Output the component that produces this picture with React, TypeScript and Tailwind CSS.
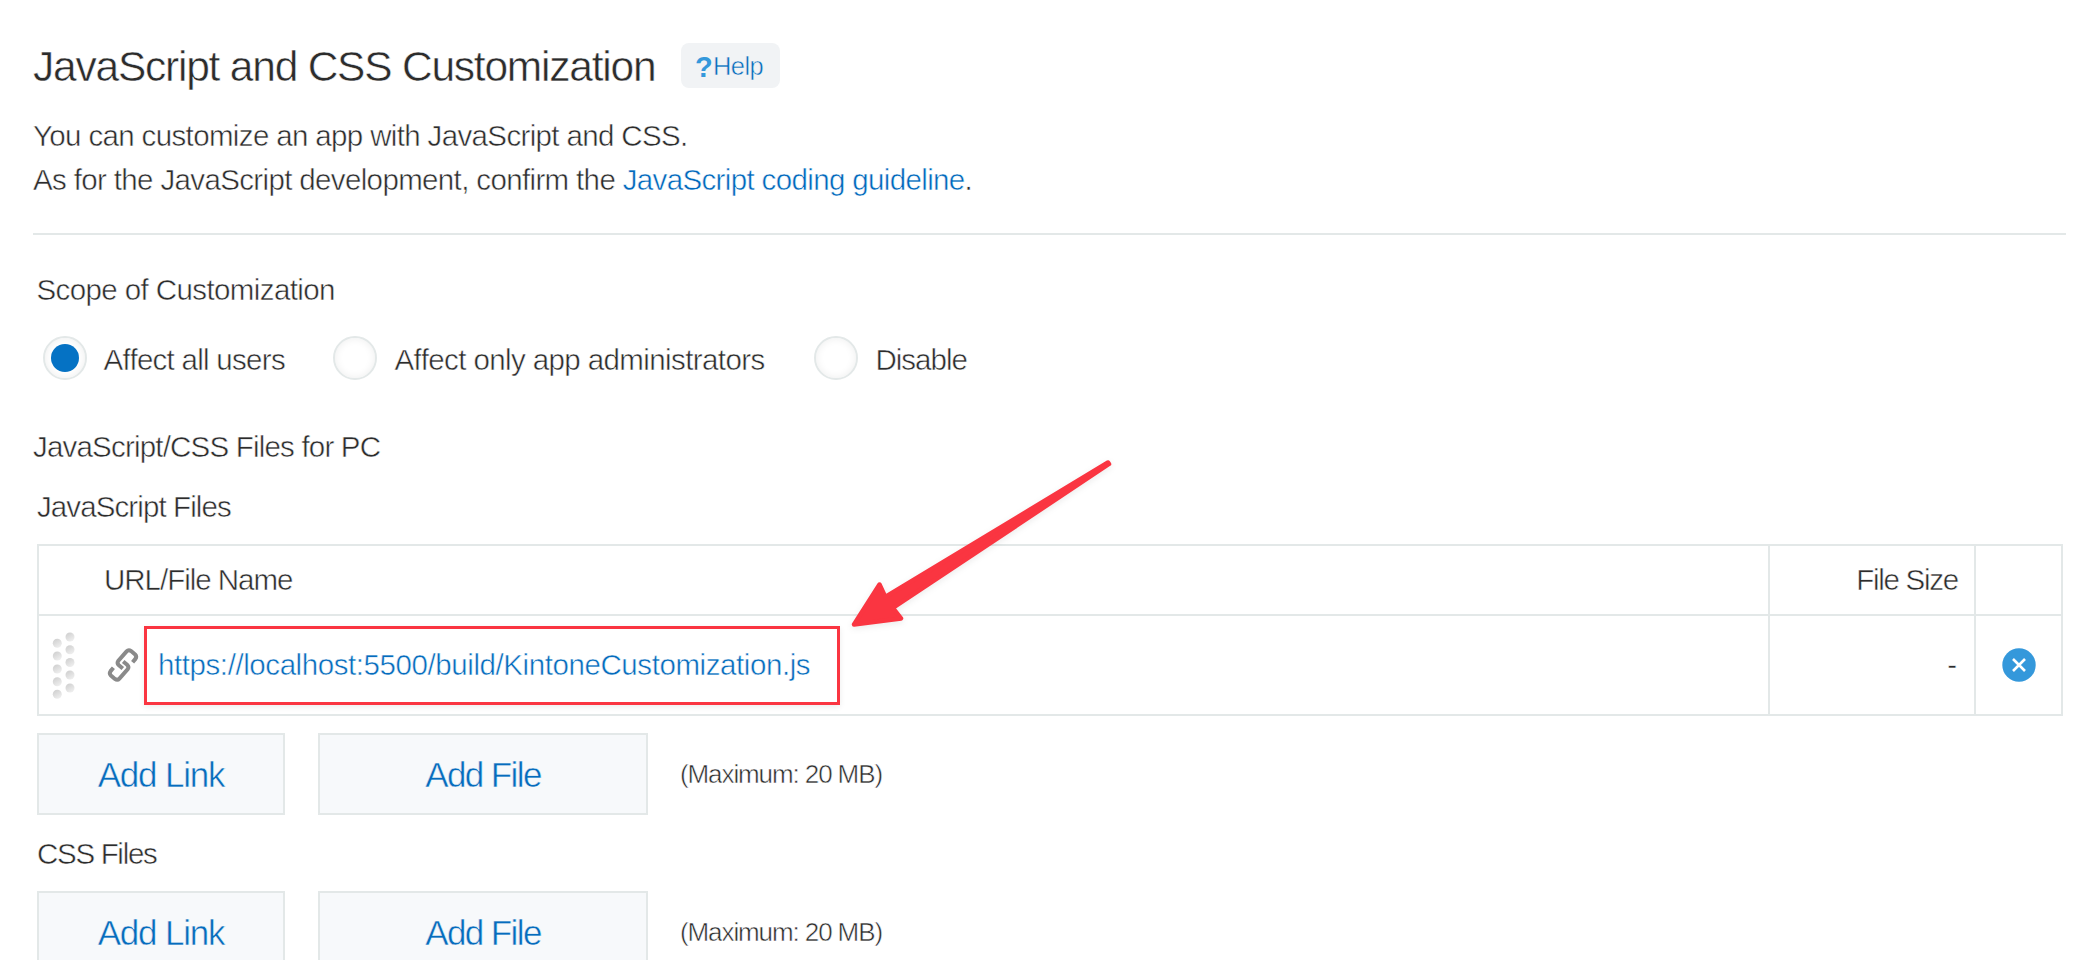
import type { ReactNode } from "react";

function RadioOption({ label, checked, className }: { label: string; checked?: boolean; className: string }) {
  return (
    <label className="flex items-start">
      <span className="flex size-11 items-center justify-center rounded-full border-2 border-[#e3e8e8] bg-white shadow-[inset_0_0_8px_rgba(0,0,0,0.07)]">
        {checked && <span className="size-7 rounded-full bg-[#0572c4]" />}
      </span>
      <span className={`mt-0.5 leading-[44px] ${className}`}>{label}</span>
    </label>
  );
}

function Heading({ children, className }: { children: ReactNode; className: string }) {
  return <h2 className={`h-11 leading-[44px] ${className}`}>{children}</h2>;
}

function Actions() {
  return (
    <div className="flex h-[82px] items-center">
      <button className="h-[82px] w-[248px] border-2 border-[#e3e8e8] bg-[#f7f9fb] pt-0.5 text-[35px] leading-[44px] tracking-[-1.2px] text-[#066cbd] [-webkit-text-stroke:0.5px_#f7f9fb]">
        Add Link
      </button>
      <button className="ml-[33px] h-[82px] w-[330px] border-2 border-[#e3e8e8] bg-[#f7f9fb] pt-0.5 text-[35px] leading-[44px] tracking-[-1.6px] text-[#066cbd] [-webkit-text-stroke:0.5px_#f7f9fb]">
        Add File
      </button>
      <span className="ml-8 pt-px text-[26px] tracking-[-1.1px]">(Maximum: 20 MB)</span>
    </div>
  );
}

function DragHandle() {
  const left = [8.3, 21, 34, 46.7, 59.3];
  const right = [2, 14.7, 27.5, 40, 53];
  return (
    <svg width="24" height="68" viewBox="-1 -3 24 68" className="mt-0.5 shrink-0">
      <defs>
        <linearGradient id="dot" x1="0.2" y1="0" x2="0.8" y2="1">
          <stop offset="0" stopColor="#cfcfcf" />
          <stop offset="0.5" stopColor="#e0e0e0" />
          <stop offset="1" stopColor="#f1f1f1" />
        </linearGradient>
      </defs>
      {left.map((y) => (
        <circle key={y} cx="4.3" cy={y} r="4.5" fill="url(#dot)" />
      ))}
      {right.map((y) => (
        <circle key={y} cx="17" cy={y} r="4.5" fill="url(#dot)" />
      ))}
    </svg>
  );
}

function LinkIcon() {
  const half = "M93,42 L95.8,38.7 Q97.5,36.3 95.5,34.3 L91.5,30.9 Q89,29 87,31.2 L78.8,40.5 Q77,43 79.3,45.1 L83.2,48.3";
  return (
    <svg width="32" height="36" viewBox="67.4 26.8 32 36" fill="none" stroke="#8a8a8a" strokeWidth="4" className="shrink-0">
      <path d={half} />
      <path d={half} transform="rotate(180 83.4 44.8)" />
    </svg>
  );
}

export default function App() {
  return (
    <main className="relative h-[960px] w-[2100px] overflow-hidden bg-white pt-[43px] pl-[33px] font-['Liberation_Sans',Arial,sans-serif] text-[29.5px] whitespace-nowrap text-[#2c2c2c] [-webkit-text-stroke:0.5px_white]">
      <header className="flex h-[71px] items-start">
        <h1 className="w-[648px] text-[42.5px] leading-[48px] tracking-[-1.22px]">JavaScript and CSS Customization</h1>
        <a className="flex h-[45px] w-[99px] items-center rounded-lg bg-[#f1f3f5] pt-0.5 pl-[14px] text-[25.5px] tracking-[-0.6px] text-[#066cbd] [-webkit-text-stroke:0.5px_#f1f3f5]">
          <b className="w-[18px] text-[29px] leading-[44px] text-[#3498db] [-webkit-text-stroke:0px]">?</b>
          Help
        </a>
      </header>

      <p className="leading-[44px] tracking-[-0.64px]">
        You can customize an app with JavaScript and CSS.
        <br />
        As for the JavaScript development, confirm the <a className="text-[#0068bc]">JavaScript coding guideline</a>.
      </p>
      <hr className="mt-[31px] w-[2033px] border-t-2 border-[#e3e8e8]" />

      <section className="mt-[33px] pl-[3.5px]">
        <Heading className="tracking-[-0.6px]">Scope of Customization</Heading>
        <div className="mt-6 flex pl-1.5">
          <div className="w-[290px]">
            <RadioOption label="Affect all users" checked className="ml-[17px] tracking-[-0.72px]" />
          </div>
          <div className="w-[481px]">
            <RadioOption label="Affect only app administrators" className="ml-[18px] tracking-[-0.6px]" />
          </div>
          <RadioOption label="Disable" className="ml-[18px] tracking-[-1px]" />
        </div>
      </section>

      <Heading className="mt-[43px] tracking-[-0.8px]">JavaScript/CSS Files for PC</Heading>

      <section className="mt-4 pl-1">
        <Heading className="tracking-[-0.9px]">JavaScript Files</Heading>
        <div className="mt-[15px] grid w-[2026px] grid-cols-[1729px_208px_1fr] grid-rows-[70px_98px] border-2 border-[#e3e8e8] leading-[44px]">
          <div className="flex items-center border-b-2 border-[#e3e8e8] pl-[65px] tracking-[-1.02px]">URL/File Name</div>
          <div className="flex items-center justify-end border-x-2 border-b-2 border-[#e3e8e8] pr-4 tracking-[-1.25px]">File Size</div>
          <div className="border-b-2 border-[#e3e8e8]" />
          <div className="flex items-center pl-[13px]">
            <DragHandle />
            <div className="ml-[31px]">
              <LinkIcon />
            </div>
            <div className="ml-[5px] flex h-[79px] w-[696px] items-center border-3 border-[#fa3541] pl-[11px] shadow-[0_2px_6px_rgba(0,0,0,0.08)]">
              <a className="tracking-[-0.42px] text-[#066cbd]">https://localhost:5500/build/KintoneCustomization.js</a>
            </div>
          </div>
          <div className="flex items-center justify-end border-x-2 border-[#e3e8e8] pr-[17px]">-</div>
          <div className="flex items-center justify-center pl-px">
            <svg width="34" height="34" viewBox="0 0 34 34">
              <circle cx="17" cy="17" r="16.7" fill="#3498db" />
              <path d="M11 11l12 12M23 11L11 23" stroke="white" strokeWidth="2.6" />
            </svg>
          </div>
        </div>
        <div className="mt-[17px]">
          <Actions />
        </div>
      </section>

      <section className="mt-[17px] pl-1">
        <Heading className="tracking-[-1.3px]">CSS Files</Heading>
        <div className="mt-[15px]">
          <Actions />
        </div>
      </section>

      <svg width="320" height="200" viewBox="0 0 320 200" className="absolute top-[440px] left-[820px] drop-shadow-[0_2px_3px_rgba(0,0,0,0.08)]">
        <path
          d="M34,184.5 L59.5,144.5 L65.3,157 L288,22.5 L289,24 L72.8,168 L81,178.5 Z"
          fill="#fa3541"
          stroke="#fa3541"
          strokeWidth="4.5"
          strokeLinejoin="round"
        />
      </svg>
    </main>
  );
}
